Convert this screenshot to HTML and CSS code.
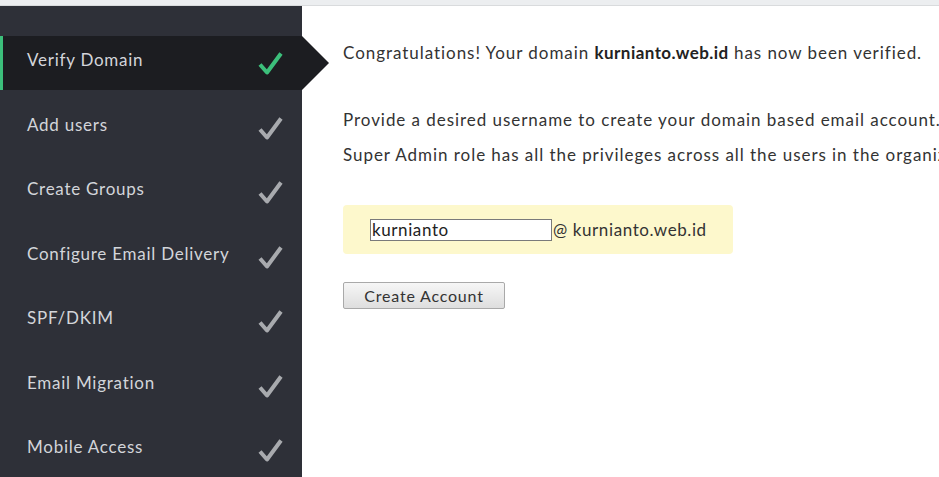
FILE: index.html
```html
<!DOCTYPE html>
<html>
<head>
<meta charset="utf-8">
<link rel="stylesheet" href="styles.css">
</head>
<body>
<div class="topbar"></div>
<div class="layout">
  <nav class="sidebar">
    <ul class="steps">
      <li class="step active"><span class="label">Verify Domain</span><svg class="check" viewBox="0 0 26 24"><path d="M3 13.5 L10 21.5 L24 2.5"/></svg></li>
      <li class="step"><span class="label">Add users</span><svg class="check" viewBox="0 0 26 24"><path d="M3 13.5 L10 21.5 L24 2.5"/></svg></li>
      <li class="step"><span class="label">Create Groups</span><svg class="check" viewBox="0 0 26 24"><path d="M3 13.5 L10 21.5 L24 2.5"/></svg></li>
      <li class="step"><span class="label">Configure Email Delivery</span><svg class="check" viewBox="0 0 26 24"><path d="M3 13.5 L10 21.5 L24 2.5"/></svg></li>
      <li class="step"><span class="label">SPF/DKIM</span><svg class="check" viewBox="0 0 26 24"><path d="M3 13.5 L10 21.5 L24 2.5"/></svg></li>
      <li class="step"><span class="label">Email Migration</span><svg class="check" viewBox="0 0 26 24"><path d="M3 13.5 L10 21.5 L24 2.5"/></svg></li>
      <li class="step"><span class="label">Mobile Access</span><svg class="check" viewBox="0 0 26 24"><path d="M3 13.5 L10 21.5 L24 2.5"/></svg></li>
    </ul>
  </nav>
  <main class="content">
    <p class="msg first">Congratulations! Your domain <b>kurnianto.web.id</b> has now been verified.</p>
    <p class="msg second">Provide a desired username to create your domain based email account.</p>
    <p class="msg">Super Admin role has all the privileges across all the users in the organization.</p>
    <div class="account-box">
      <input class="user-input" type="text" value="kurnianto"><span class="domain">@ kurnianto.web.id</span>
    </div>
    <button class="create-btn">Create Account</button>
  </main>
</div>
</body>
</html>
```
FILE: styles.css
```css
html, body {
  margin: 0;
  padding: 0;
}
body {
  width: 939px;
  height: 477px;
  overflow: hidden;
  background: #ffffff;
  font-family: Lato, "Open Sans", sans-serif;
}
.topbar {
  height: 5px;
  background: #eceef0;
  border-bottom: 1px solid #d9dbdd;
}
.layout {
  display: flex;
  height: 471px;
}
.sidebar {
  width: 302px;
  flex: none;
  background: #2e3038;
  padding-top: 30px;
  box-sizing: border-box;
}
.steps {
  list-style: none;
  margin: 0;
  padding: 0;
  display: flex;
  flex-direction: column;
  gap: 10.5px;
}
.step {
  position: relative;
  height: 54px;
  display: flex;
  align-items: center;
  justify-content: space-between;
  padding: 0 19px 0 27px;
  box-sizing: border-box;
}
.label {
  color: #d3d5da;
  font-size: 17px;
  letter-spacing: 0.75px;
  margin-top: -7px;
}
.check {
  width: 26px;
  height: 24px;
  fill: none;
  stroke: #a8aaae;
  stroke-width: 4;
  stroke-linejoin: round;
}
.step.active {
  background: #1c1d21;
  border-left: 3px solid #3cbf7b;
  padding-left: 24px;
}
.step.active .check {
  stroke: #3cbf7b;
}
.step.active::after {
  content: "";
  position: absolute;
  right: -27px;
  top: 0;
  border-left: 27px solid #1c1d21;
  border-top: 27px solid transparent;
  border-bottom: 27px solid transparent;
}
.content {
  flex: 1;
  min-width: 0;
  padding: 37px 0 0 41px;
  overflow: hidden;
  color: #333333;
}
.msg {
  margin: 0;
  font-size: 17px;
  line-height: 20px;
  letter-spacing: 0.95px;
  white-space: nowrap;
}
.msg b {
  color: #222222;
  letter-spacing: 0.45px;
}
.msg.first {
  margin-bottom: 47px;
}
.msg.second {
  margin-bottom: 15px;
}
.account-box {
  width: 390px;
  height: 49px;
  margin-top: 40px;
  background: #fdf8cc;
  border-radius: 4px;
  display: flex;
  align-items: center;
  padding-left: 27px;
  box-sizing: border-box;
}
.user-input {
  width: 182px;
  height: 22px;
  box-sizing: border-box;
  border: 1px solid #7a7a7a;
  padding: 0 1px;
  margin: 0;
  font-family: Lato, "Open Sans", sans-serif;
  font-size: 17px;
  letter-spacing: 0.6px;
  color: #222222;
  background: #ffffff;
  outline: none;
}
.domain {
  font-size: 17px;
  letter-spacing: 0.6px;
  color: #333333;
  margin-left: 1px;
}
.create-btn {
  display: block;
  margin-top: 28px;
  width: 162px;
  height: 27px;
  border: 1px solid #a9a9a9;
  border-radius: 2px;
  background: linear-gradient(#f6f6f6, #dedede);
  font-family: Lato, "Open Sans", sans-serif;
  font-size: 16px;
  letter-spacing: 0.8px;
  color: #333333;
  padding: 0;
}
```
